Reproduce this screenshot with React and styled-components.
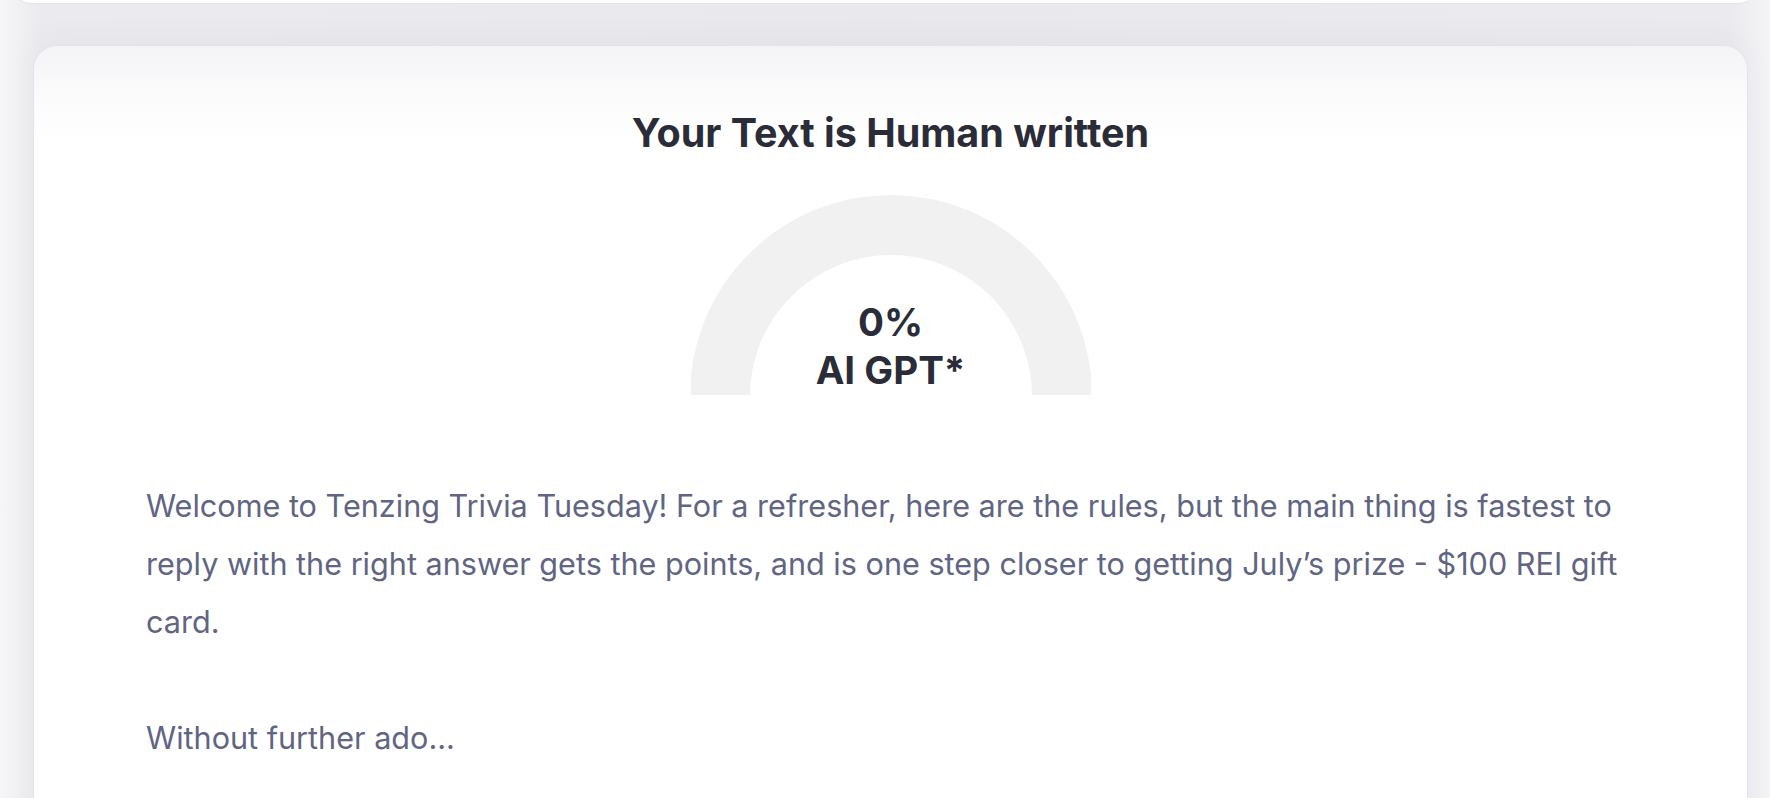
import React from "react"
import styled, { createGlobalStyle } from "styled-components"

const GlobalStyle = createGlobalStyle`
  html, body {
    margin: 0;
    padding: 0;
    background: #f5f5f8;
    font-family: Inter, "Noto Sans", sans-serif;
    overflow: hidden;
  }
`

const Page = styled.div`
  min-height: 798px;
  padding: 0 10px;
  background: linear-gradient(90deg, #f6f6f8 0, #ebebef 40px, #e9e9ed 50%, #ebebef calc(100% - 40px), #f4f4f7 100%);
`

const TopCard = styled.div`
  height: 62px;
  margin-top: -60px;
  background: #fff;
  border: 1.5px solid #e3e4ee;
  border-radius: 22px;
`

const MainCard = styled.div`
  margin: 41px 12px 0 23px;
  min-height: 800px;
  padding-top: 64px;
  background: linear-gradient(180deg, #f4f4f7 0, #fbfbfc 50px, #fff 95px);
  border: 1.5px solid #e2e3f0;
  border-bottom: none;
  border-radius: 24px 24px 0 0;
  box-shadow: 0 -6px 30px rgba(40, 40, 70, 0.04);
  display: flex;
  flex-direction: column;
  align-items: center;
`

const Title = styled.h1`
  margin: 0;
  font-size: 39.5px;
  line-height: 47px;
  font-weight: 700;
  color: #2a2c38;
`

const Gauge = styled.div`
  position: relative;
  width: 400px;
  height: 200px;
  margin-top: 38px;
`

const GaugeLabel = styled.div`
  position: absolute;
  left: 0;
  right: 0;
  bottom: 1px;
  text-align: center;
  font-size: 38.5px;
  line-height: 48px;
  font-weight: 700;
  color: #2a2c38;
`

const Body = styled.div`
  align-self: stretch;
  margin-top: 82px;
  padding: 0 112px;
  font-size: 30.6px;
  line-height: 58px;
  color: #5f6583;
  white-space: pre-wrap;
`

const arc = (r) => `M ${200 - r} 201 A ${r} ${r} 0 0 1 ${200 + r} 201`

const text = `Welcome to Tenzing Trivia Tuesday! For a refresher, here are the rules, but the main thing is fastest to reply with the right answer gets the points, and is one step closer to getting July’s prize - $100 REI gift card.

Without further ado...`

export default function App() {
  return <>
    <GlobalStyle />
    <Page>
      <TopCard />
      <MainCard>
        <Title>Your Text is Human written</Title>
        <Gauge>
          <svg width="400" height="200" viewBox="0 0 400 200">
            <path d={arc(171)} fill="none" stroke="#f1f1f1" strokeWidth="60" />
          </svg>
          <GaugeLabel>0%<br />AI GPT*</GaugeLabel>
        </Gauge>
        <Body>{text}</Body>
      </MainCard>
    </Page>
  </>
}
